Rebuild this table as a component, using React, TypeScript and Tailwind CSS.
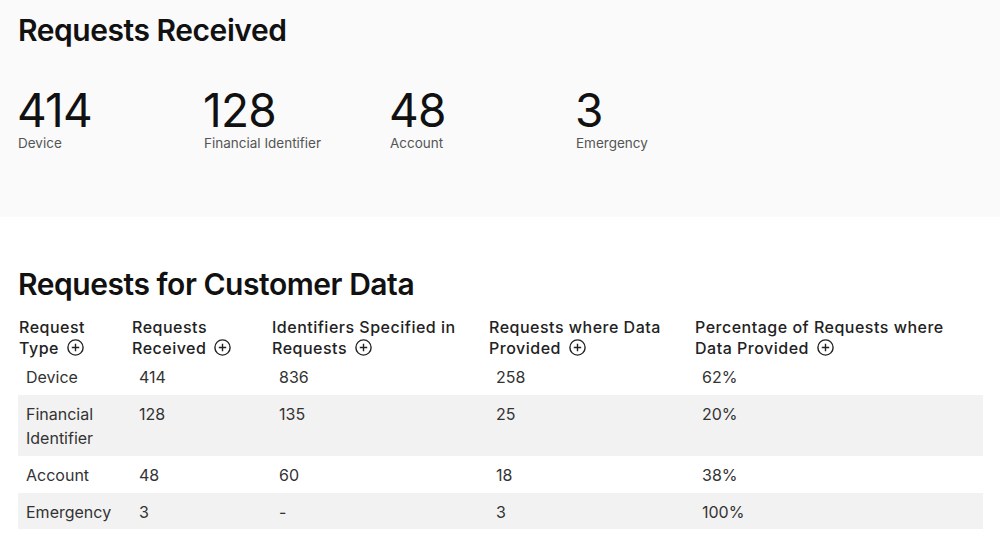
import React from "react";

const PlusCircle = () => (
  <svg width="17" height="17" viewBox="0 0 17 17" className="inline-block ml-[8px] align-[-2px]" fill="none" stroke="#222" strokeWidth="1.4">
    <circle cx="8.5" cy="8.5" r="7.6" />
    <path d="M8.5 4.8v7.4M4.8 8.5h7.4" />
  </svg>
);

const stats = [
  { n: "414", l: "Device" },
  { n: "128", l: "Financial Identifier" },
  { n: "48", l: "Account" },
  { n: "3", l: "Emergency" },
];

const headers: [string, string][] = [
  ["Request", "Type"],
  ["Requests", "Received"],
  ["Identifiers Specified in", "Requests"],
  ["Requests where Data", "Provided"],
  ["Percentage of Requests where", "Data Provided"],
];

const rows = [
  ["Device", "414", "836", "258", "62%"],
  ["Financial Identifier", "128", "135", "25", "20%"],
  ["Account", "48", "60", "18", "38%"],
  ["Emergency", "3", "-", "3", "100%"],
];

const widths = ["w-[113px]", "w-[140px]", "w-[217px]", "w-[206px]", "w-[289px]"];

export default function App() {
  return (
    <div className="w-[1000px] h-[544px] bg-white overflow-hidden text-[#111]" style={{ fontFamily: "Inter, 'Noto Sans', sans-serif" }}>
      <section className="bg-[#fafafa] h-[217px] px-[18px] pt-[12px]">
        <h1 className="text-[30px] leading-[36px] font-semibold tracking-[-0.45px]">Requests Received</h1>
        <div className="flex mt-[38px]">
          {stats.map((s) => (
            <div key={s.l} className="w-[186px]">
              <div className="text-[46px] leading-[48px] font-normal tracking-[-0.8px] text-[#111] -ml-[1px]">{s.n}</div>
              <div className="text-[13.5px] leading-[18px] text-[#555]">{s.l}</div>
            </div>
          ))}
        </div>
      </section>
      <section className="px-[18px] pt-[49px]">
        <h2 className="text-[30px] leading-[36px] font-semibold tracking-[-0.45px]">Requests for Customer Data</h2>
        <table className="mt-[15px] w-[965px] table-fixed border-collapse text-[16px] text-[#333]">
          <colgroup>
            {widths.map((w, i) => (
              <col key={i} className={w} />
            ))}
          </colgroup>
          <thead>
            <tr>
              {headers.map((h, i) => (
                <th key={i} className="text-left align-top font-medium leading-[20.5px] pl-[1px] pb-0 text-[#222] tracking-[0.5px] whitespace-nowrap">
                  {h[0]}
                  <br />
                  {h[1]}
                  <PlusCircle />
                </th>
              ))}
            </tr>
          </thead>
          <tbody>
            {rows.map((r, ri) => (
              <tr key={ri} className={ri % 2 === 1 ? "bg-[#f2f2f2]" : "bg-white"}>
                {r.map((c, ci) => (
                  <td key={ci} className={`align-top leading-[24px] pl-[8px] pt-[7px] ${ri === 3 ? "pb-[5px]" : "pb-[6px]"}`}>
                    {ci === 0 && c === "Financial Identifier" ? (
                      <>
                        Financial
                        <br />
                        Identifier
                      </>
                    ) : (
                      c
                    )}
                  </td>
                ))}
              </tr>
            ))}
          </tbody>
        </table>
      </section>
    </div>
  );
}
